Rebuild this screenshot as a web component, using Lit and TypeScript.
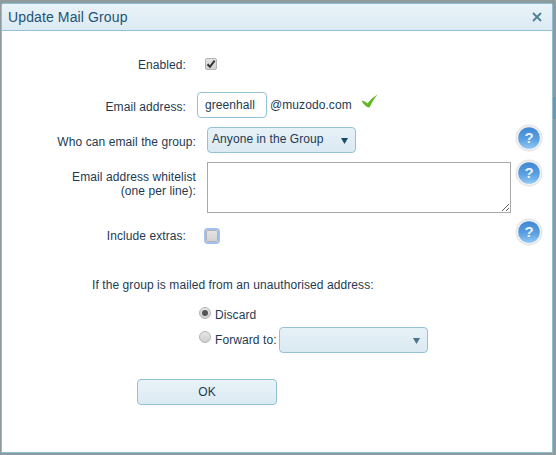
import { LitElement, html, css, svg } from 'lit';
import { customElement } from 'lit/decorators.js';

const helpIcon = (cls: string) => svg`<svg class="help ${cls}" width="28" height="28" viewBox="0 0 28 28">
  <defs>
    <linearGradient id="ball" x1="0" y1="0" x2="0" y2="1">
      <stop offset="0" stop-color="#3f87d2"/>
      <stop offset="0.55" stop-color="#5a9fe2"/>
      <stop offset="1" stop-color="#8fc8f5"/>
    </linearGradient>
  </defs>
  <circle cx="14" cy="14" r="13.5" fill="#e6e6e6"/>
  <circle cx="14" cy="14" r="12" fill="#f4f4f4"/>
  <circle cx="14" cy="14" r="10.8" fill="url(#ball)"/>
  <text x="14" y="19" text-anchor="middle" class="q">?</text>
</svg>`;

@customElement('app-root')
export class AppRoot extends LitElement {
    static styles = css`
        :host {
            display: block;
            width: 556px;
            height: 455px;
            box-sizing: border-box;
            padding: 3px 3px 2px 1px;
            background: #8d9a9e;
            font-family: "Liberation Sans", Arial, sans-serif;
            font-size: 12px;
            letter-spacing: 0.08px;
            color: #1e3a52;
            overflow: hidden;
            position: relative;
        }
        .blotch {
            position: absolute;
            left: 553px;
            top: 97px;
            width: 3px;
            height: 22px;
            background: #6f97ae;
        }
        .dialog {
            height: 100%;
            box-sizing: border-box;
            background: #fff;
            border: 1px solid #8fbdd2;
            border-radius: 3px 3px 0 0;
            display: flex;
            flex-direction: column;
        }
        .header {
            height: 27px;
            flex: none;
            box-sizing: border-box;
            display: flex;
            align-items: center;
            justify-content: space-between;
            padding: 0 10px 0 6px;
            background: linear-gradient(#e9f3f8, #dceaf3);
            border-bottom: 1px solid #93c1d8;
            font-size: 14px;
            letter-spacing: 0.12px;
            color: #1f5372;
        }
        .close { display: block; }
        .form {
            padding-top: 20px;
            display: flex;
            flex-direction: column;
        }
        .row {
            display: flex;
            align-items: center;
            position: relative;
            height: 26px;
        }
        .row.email-row { margin-top: 15px; }
        .row.who-row { margin-top: 9px; }
        .row.list-row { height: 51px; margin-top: 9px; align-items: flex-start; }
        .row.extras-row { height: 16px; margin-top: 15px; }
        .row.discard-row { height: 16px; margin-top: 15px; }
        .row.forward-row { margin-top: 4px; }
        .label {
            width: 194px;
            flex: none;
            box-sizing: border-box;
            text-align: right;
            line-height: 14px;
        }
        .label.short { padding-right: 10px; }
        .label.down1 { padding-top: 2px; }
        .label.down2 { padding-top: 4px; }
        .label.list { padding-top: 8px; }
        .help {
            position: absolute;
            left: 513px;
            display: block;
        }
        .help.top { top: -3px; }
        .help.extras { top: -10px; }
        .q {
            font-family: "Liberation Sans", Arial, sans-serif;
            font-size: 15px;
            font-weight: bold;
            fill: #e8f2fb;
        }
        .check {
            width: 12px;
            height: 12px;
            box-sizing: border-box;
            background: linear-gradient(#e4e4e4, #d2d2d2);
            border: 1px solid #b4b4b4;
            border-radius: 2px;
            margin-left: 9px;
            display: flex;
            align-items: center;
            justify-content: center;
        }
        .check.focus {
            margin-left: 10px;
            box-shadow: 0 0 0 2px #a3bfee;
        }
        .email {
            width: 70px;
            height: 26px;
            box-sizing: border-box;
            border: 1px solid #93c1d8;
            border-radius: 4px;
            padding: 0 7px;
            margin-left: 1px;
            font: inherit;
            letter-spacing: inherit;
            color: inherit;
            background: #fff;
            outline: none;
        }
        .domain { margin-left: 3px; }
        .tick { margin-left: 9px; position: relative; top: -4px; display: block; }
        .select-wrap {
            position: relative;
            width: 149px;
            height: 26px;
            flex: none;
        }
        .select-wrap select {
            appearance: none;
            width: 100%;
            height: 100%;
            box-sizing: border-box;
            border: 1px solid #93c1d8;
            border-radius: 4px;
            background: linear-gradient(#e7f1f7, #dbe9f2);
            font: inherit;
            letter-spacing: inherit;
            color: inherit;
            padding: 0 4px 2px;
            outline: none;
        }
        .select-wrap svg {
            position: absolute;
            right: 8px;
            top: 11px;
        }
        .who { margin-left: 11px; }
        textarea {
            display: block;
            width: 304px;
            height: 51px;
            box-sizing: border-box;
            border: 1px solid #a9a9a9;
            margin: 0 0 0 11px;
            padding: 2px;
            font: inherit;
            outline: none;
        }
        .notice {
            margin-top: 34px;
            padding-left: 90px;
            line-height: 14px;
        }
        .radio-row { padding-left: 197px; }
        .radio {
            width: 12px;
            height: 12px;
            box-sizing: border-box;
            border-radius: 50%;
            border: 1px solid #b4b4b4;
            background: linear-gradient(#e6e6e6, #cfcfcf);
            margin-right: 4px;
            position: relative;
            top: -2px;
            display: flex;
            align-items: center;
            justify-content: center;
        }
        .radio.high { top: -3px; }
        .radio i {
            width: 6px;
            height: 6px;
            border-radius: 50%;
            background: #555;
        }
        .forward { margin-left: 2px; }
        .arrow-light { opacity: 0.75; }
        .ok {
            display: block;
            width: 140px;
            height: 26px;
            box-sizing: border-box;
            margin: 26px 0 0 135px;
            border: 1px solid #93c1d8;
            border-radius: 4px;
            background: linear-gradient(#e9f3f8, #dceaf3);
            font: inherit;
            letter-spacing: inherit;
            color: inherit;
            padding: 0;
        }
    `;

    arrow(cls = '') {
        return html`<svg class=${cls} width="7" height="6" viewBox="0 0 7 6"><path d="M0 0H7L3.5 6Z" fill="#1d4c66"/></svg>`;
    }

    render() {
        return html`
            <div class="blotch"></div>
            <div class="dialog">
                <div class="header">
                    <span>Update Mail Group</span>
                    <svg class="close" width="10" height="10" viewBox="0 0 10 10"><path d="M1 1L9 9M9 1L1 9" stroke="#4d7f96" stroke-width="1.8"/></svg>
                </div>
                <div class="form">
                    <div class="row">
                        <div class="label short down1">Enabled:</div>
                        <span class="check">
                            <svg width="10" height="10" viewBox="0 0 10 10"><path d="M1.5 5.2L4 7.8L8.6 1.6" fill="none" stroke="#333" stroke-width="2"/></svg>
                        </span>
                    </div>
                    <div class="row email-row">
                        <div class="label short down2">Email address:</div>
                        <input class="email" .value=${'greenhall'} />
                        <span class="domain">@muzodo.com</span>
                        <svg class="tick" width="17" height="14" viewBox="0 0 17 14"><path d="M0.5 6.5C3 6.8 5 8 6.5 9.5C9 6 12.5 2.8 16.5 0.5C13.5 4.5 10.5 9 8.5 13.5C6.5 13.8 2.5 11 0.5 6.5Z" fill="#62b820"/></svg>
                    </div>
                    <div class="row who-row">
                        <div class="label down2">Who can email the group:</div>
                        <div class="select-wrap who">
                            <select><option>Anyone in the Group</option></select>
                            ${this.arrow()}
                        </div>
                        ${helpIcon('top')}
                    </div>
                    <div class="row list-row">
                        <div class="label list">Email address whitelist<br />(one per line):</div>
                        <textarea></textarea>
                        ${helpIcon('top')}
                    </div>
                    <div class="row extras-row">
                        <div class="label short">Include extras:</div>
                        <span class="check focus"></span>
                        ${helpIcon('extras')}
                    </div>
                    <div class="notice">If the group is mailed from an unauthorised address:</div>
                    <div class="row radio-row discard-row">
                        <span class="radio"><i></i></span>
                        <span>Discard</span>
                    </div>
                    <div class="row radio-row forward-row">
                        <span class="radio high"></span>
                        <span>Forward to:</span>
                        <div class="select-wrap forward">
                            <select></select>
                            ${this.arrow('arrow-light')}
                        </div>
                    </div>
                    <button class="ok">OK</button>
                </div>
            </div>
        `;
    }
}
